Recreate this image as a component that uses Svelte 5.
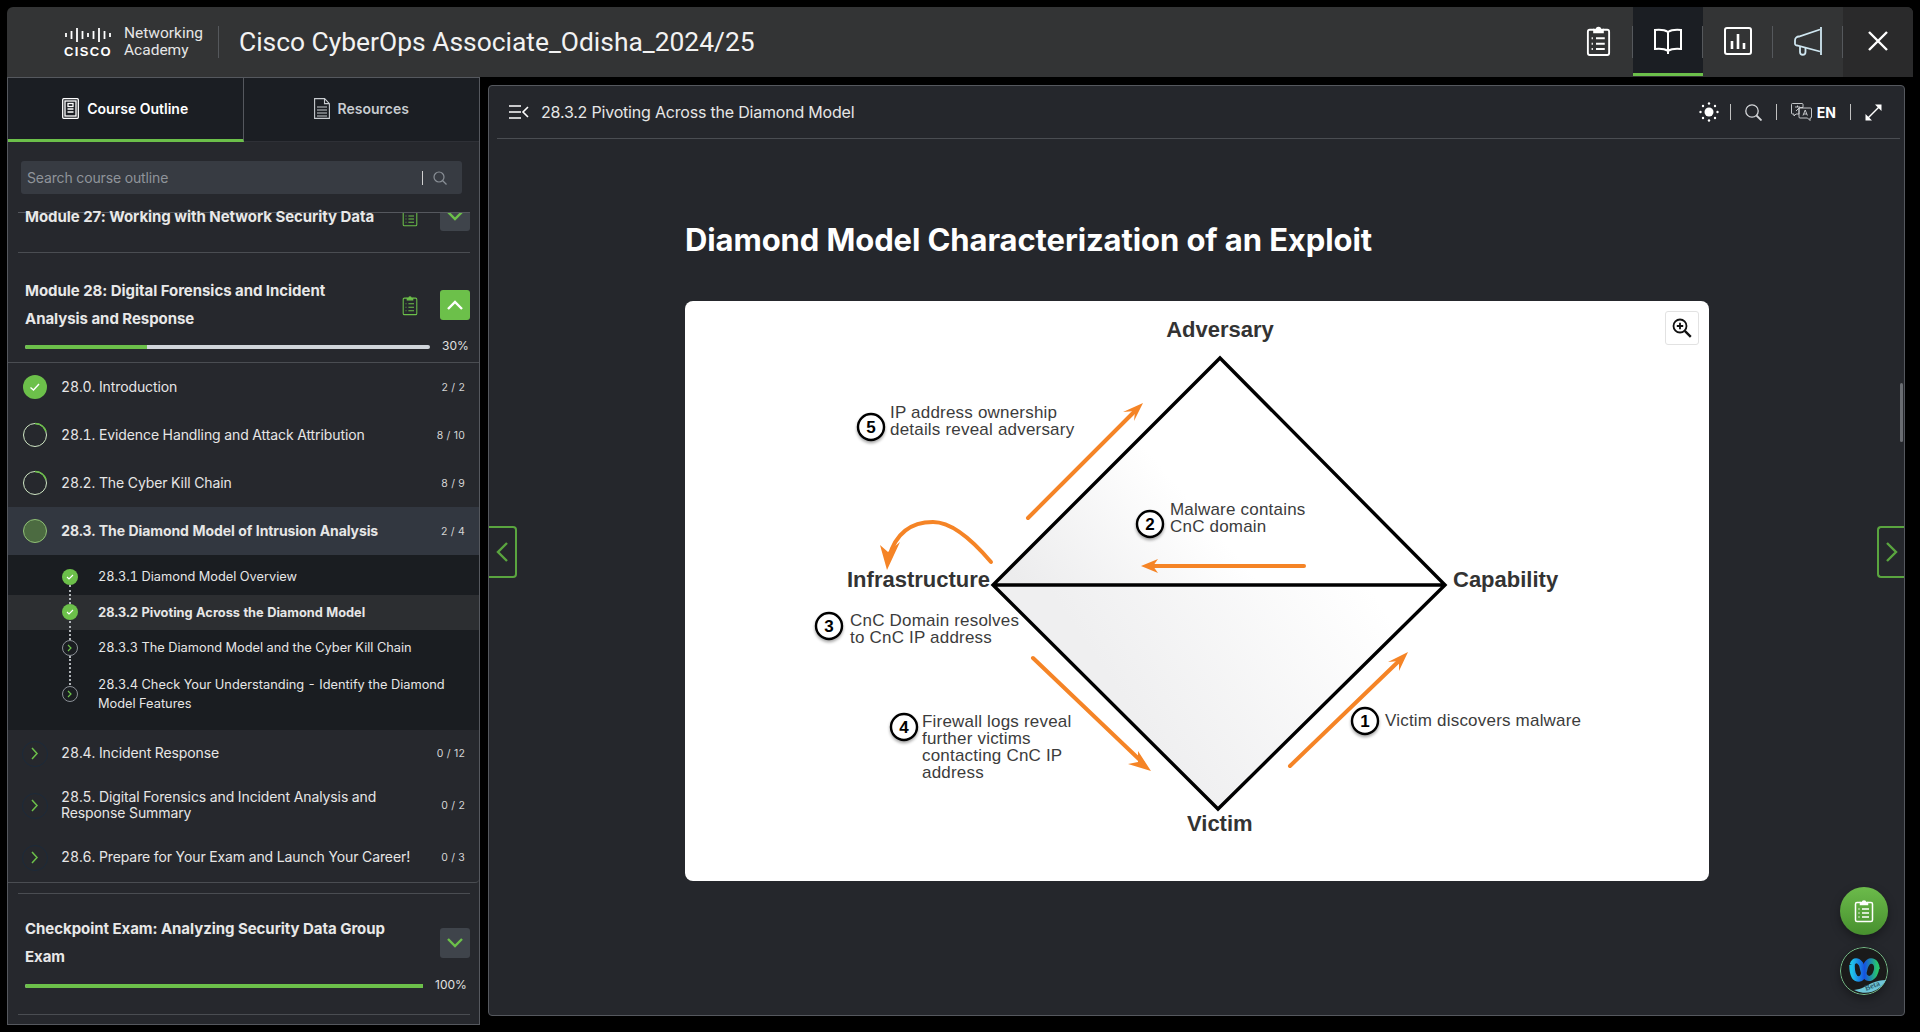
<script>
  const lessons = [
    { id: '28.0.', title: 'Introduction', count: '2 / 2', state: 'done' },
    { id: '28.1.', title: 'Evidence Handling and Attack Attribution', count: '8 / 10', state: 'part' },
    { id: '28.2.', title: 'The Cyber Kill Chain', count: '8 / 9', state: 'part' },
    { id: '28.3.', title: 'The Diamond Model of Intrusion Analysis', count: '2 / 4', state: 'open' }
  ]
  const subs = [
    { title: '28.3.1 Diamond Model Overview', done: true },
    { title: '28.3.2 Pivoting Across the Diamond Model', done: true, active: true },
    { title: '28.3.3 The Diamond Model and the Cyber Kill Chain' },
    { title: '28.3.4 Check Your Understanding - Identify the Diamond Model Features', tall: true }
  ]
  const later = [
    { id: '28.4.', title: 'Incident Response', count: '0 / 12' },
    { id: '28.5.', title: 'Digital Forensics and Incident Analysis and Response Summary', count: '0 / 2', tall: true },
    { id: '28.6.', title: 'Prepare for Your Exam and Launch Your Career!', count: '0 / 3' }
  ]
  // x, y and length of each bar in the cisco mark
  const bars = [
    [1, 5, 4], [6.500, 3, 8], [12, 0, 14], [17.500, 3, 8], [23, 5, 4], [28.500, 3, 8], [34, 0, 14], [39.500, 3, 8], [45, 5, 4]
  ]
  const notes = [
    { n: 5, cx: 186, cy: 126, x: 205, lines: [['IP address ownership', 117], ['details reveal adversary', 134]] },
    { n: 2, cx: 465, cy: 223, x: 485, lines: [['Malware contains', 214], ['CnC domain', 231]] },
    { n: 3, cx: 144, cy: 325, x: 165, lines: [['CnC Domain resolves', 325], ['to CnC IP address', 342]] },
    { n: 4, cx: 219, cy: 426, x: 237, lines: [['Firewall logs reveal', 426], ['further victims', 443], ['contacting CnC IP', 460], ['address', 477]] },
    { n: 1, cx: 680, cy: 420, x: 700, lines: [['Victim discovers malware', 425]] }
  ]
</script>

{#snippet clipboard(w, h, color, sw)}
  <svg width={w} height={h} viewBox="0 0 20 24" preserveAspectRatio="none" fill="none" stroke={color} stroke-width={sw}>
    <path d="M6.500 3.500H3a1.500 1.500 0 0 0-1.500 1.500v16A1.500 1.500 0 0 0 3 22.500h14a1.500 1.500 0 0 0 1.500-1.500V5A1.500 1.500 0 0 0 17 3.500h-3.500" />
    <path d="M6.500 5.500V3.500h2a1.500 1.500 0 0 1 3 0h2v2z" fill={color} />
    <path d="M8 10h7M8 14h7M8 18h7M4.500 10h1M4.500 14h1M4.500 18h1" />
  </svg>
{/snippet}

<div class="app">
  <header class="topbar">
    <div class="logo">
      <div class="cisco">
        <svg width="46" height="14" viewBox="0 0 46 14" fill="none" stroke="#fff" stroke-width="1.800">
          {#each bars as b}
            <line x1={b[0]} x2={b[0]} y1={b[1]} y2={b[1] + b[2]} />
          {/each}
        </svg>
        <span class="cisco-word">CISCO</span>
      </div>
      <div class="academy"><span>Networking</span><span>Academy</span></div>
    </div>
    <h1>Cisco CyberOps Associate_Odisha_2024/25</h1>
    <nav class="top-icons">
      <button class="top-btn">
        {@render clipboard(25, 32, '#fff', 1.5)}
      </button>
      <button class="top-btn current">
        <svg width="30" height="28" viewBox="0 0 30 28" fill="none" stroke="#fff" stroke-width="2">
          <path d="M15 6c-3-2-8-2.500-13-2v19c5-.5 10 0 13 2 3-2 8-2.500 13-2V4c-5-.5-10 0-13 2zM15 6v22" />
        </svg>
      </button>
      <button class="top-btn">
        <svg width="28" height="28" viewBox="0 0 28 28" fill="none" stroke="#fff" stroke-width="2">
          <rect x="1" y="1" width="26" height="26" rx="2" />
          <path d="M8 14v8M14 7v15M20 16v6" stroke-width="2.600" />
        </svg>
      </button>
      <button class="top-btn">
        <svg width="30" height="30" viewBox="0 0 30 30" fill="none" stroke="#cfe6f0" stroke-width="1.800">
          <path d="M27 3.500 6 10.500a4 4 0 0 0-4 4V17a2 2 0 0 0 2 2.500L27 25.500" />
          <path d="M28 1v28M7 20.500V26a2.700 2.700 0 0 0 5.500 0v-4" />
        </svg>
      </button>
      <button class="top-btn close">
        <svg width="20" height="20" viewBox="0 0 20 20" stroke="#fff" stroke-width="2.400"><path d="M1 1l18 18M19 1 1 19" /></svg>
      </button>
    </nav>
  </header>

  <div class="columns">
    <aside class="sidebar">
      <div class="tabs">
        <div class="tab selected">
          <svg width="17" height="21" viewBox="0 0 17 21" fill="none" stroke="#fff" stroke-width="1.300">
            <rect x=".7" y=".7" width="15.600" height="19.600" rx="1" />
            <rect x="3" y="3" width="11" height="15" />
            <rect x="6" y="5.500" width="5" height="3" />
            <path d="M5.500 11h6M5.500 14h6" />
          </svg>
          <span>Course Outline</span>
        </div>
        <div class="tab">
          <svg width="16" height="21" viewBox="0 0 16 21" fill="none" stroke="#c8ccd0" stroke-width="1.100">
            <path d="M.6.6h10l4.800 5v14.800H.6zM10.500.6v5h4.900M3 9h10M3 12h10M3 15h10M3 18h10" />
          </svg>
          <span>Resources</span>
        </div>
      </div>
      <div class="search-wrap">
        <div class="search">
          <span class="placeholder">Search course outline</span>
          <i class="caret"></i>
          <svg width="14" height="14" viewBox="0 0 14 14" fill="none" stroke="#888e95" stroke-width="1.200"><circle cx="6" cy="6" r="5" /><path d="m9.500 9.500 4 4" /></svg>
        </div>
      </div>

      <div class="outline">
        <section class="module clipped">
          <div class="mod-title">Module 27: Working with Network Security Data</div>
          <span class="mod-icon">{@render clipboard(16, 19, '#6cc04a', 1.3)}</span>
          <span class="chev-btn">
            <svg width="16" height="10" viewBox="0 0 16 10" fill="none" stroke="#6cc04a" stroke-width="2.400"><path d="m1 1 7 7 7-7" /></svg>
          </span>
        </section>

        <section class="module-open">
          <div class="mod-head">
            <div class="mod-title">Module 28: Digital Forensics and Incident Analysis and Response</div>
            <span class="mod-icon">{@render clipboard(16, 21, '#6cc04a', 1.3)}</span>
            <span class="chev-btn on">
              <svg width="16" height="10" viewBox="0 0 16 10" fill="none" stroke="#fff" stroke-width="2.400"><path d="m1 9 7-7 7 7" /></svg>
            </span>
          </div>
          <div class="progress">
            <div class="track"><div class="fill" style="width: 30%"></div></div>
            <span>30%</span>
          </div>
        </section>

        <div class="lessons">
          {#each lessons as l}
            <div class="lesson" class:open={l.state === 'open'}>
              <svg class="ring" width="26" height="26" viewBox="0 0 26 26">
                {#if l.state === 'done'}
                  <circle cx="13" cy="13" r="12" fill="#6cc04a" />
                  <path d="m8.500 13.500 3 2.500 5.500-6" fill="none" stroke="#fff" stroke-width="1.400" />
                {:else if l.state === 'open'}
                  <circle cx="13" cy="13" r="11.500" fill="#4c6b41" stroke="#8fbf75" />
                {:else}
                  <circle cx="13" cy="13" r="11.500" fill="none" stroke="#cfe6c4" stroke-width="1" />
                  <path d="M13 1.500a11.500 11.500 0 0 1 10.900 8" fill="none" stroke="#6cc04a" stroke-width="1.600" />
                {/if}
              </svg>
              <span class="lesson-title">{l.id} {l.title}</span>
              <span class="count">{l.count}</span>
            </div>
          {/each}

          <div class="subs">
            {#each subs as s}
              <div class="sub" class:active={s.active} class:tall={s.tall}>
                <span class="dot" class:done={s.done}>
                  {#if s.done}
                    <svg width="10" height="10" viewBox="0 0 10 10" fill="none" stroke="#fff" stroke-width="1.100"><path d="m2 5 2 2 4-4" /></svg>
                  {:else}
                    <svg width="6" height="8" viewBox="0 0 6 8" fill="none" stroke="#6cc04a" stroke-width="1.200"><path d="m1 1 3 3-3 3" /></svg>
                  {/if}
                </span>
                <span class="sub-title">{s.title}</span>
              </div>
            {/each}
          </div>

          {#each later as l}
            <div class="lesson" class:tall={l.tall}>
              <span class="ring go">
                <svg width="8" height="13" viewBox="0 0 8 13" fill="none" stroke="#6cc04a" stroke-width="1.500"><path d="m1 1 5 5.500L1 12" /></svg>
              </span>
              <span class="lesson-title">{l.id} {l.title}</span>
              <span class="count">{l.count}</span>
            </div>
          {/each}
        </div>

        <section class="module-open checkpoint">
          <div class="mod-head">
            <div class="mod-title">Checkpoint Exam: Analyzing Security Data Group Exam</div>
            <span class="chev-btn">
              <svg width="16" height="10" viewBox="0 0 16 10" fill="none" stroke="#6cc04a" stroke-width="2.400"><path d="m1 1 7 7 7-7" /></svg>
            </span>
          </div>
          <div class="progress full">
            <div class="track"><div class="fill" style="width: 100%"></div></div>
            <span>100%</span>
          </div>
        </section>
      </div>
    </aside>

    <main class="page">
      <div class="page-head">
        <svg width="20" height="14" viewBox="0 0 20 14" fill="none" stroke="#fff" stroke-width="1.600"><path d="M0 1h12M0 7h12M0 13h12M19 2l-5 5 5 5" /></svg>
        <span class="crumb">28.3.2 Pivoting Across the Diamond Model</span>
        <div class="tools">
          <svg width="20" height="20" viewBox="0 0 20 20" fill="#fff">
            <circle cx="10" cy="10" r="4.500" />
            <circle cx="10" cy="1.500" r="1.200" /><circle cx="10" cy="18.500" r="1.200" /><circle cx="1.500" cy="10" r="1.200" /><circle cx="18.500" cy="10" r="1.200" />
            <circle cx="4" cy="4" r="1.200" /><circle cx="16" cy="4" r="1.200" /><circle cx="4" cy="16" r="1.200" /><circle cx="16" cy="16" r="1.200" />
          </svg>
          <i class="sep first"></i>
          <svg width="17" height="17" viewBox="0 0 17 17" fill="none" stroke="#d5d7da" stroke-width="1.300"><circle cx="7" cy="7" r="6.200" /><path d="m11.500 11.500 5 5" stroke-width="1.800" /></svg>
          <i class="sep"></i>
          <span class="lang">
            <svg width="21" height="18" viewBox="0 0 21 18" fill="none" stroke="#d5d7da" stroke-width=".9">
              <path d="M1.500.5h9.500a1 1 0 0 1 1 1v3H9a1 1 0 0 0-1 1v5.500H5l-2 2v-2H1.500a1 1 0 0 1-1-1v-8.500a1 1 0 0 1 1-1z" />
              <path d="M9 5h10.500a1 1 0 0 1 1 1v8a1 1 0 0 1-1 1H19v2.500L16.500 15H9a1 1 0 0 1-1-1V6a1 1 0 0 1 1-1zM12 12.500l2.200-5.500 2.200 5.500M12.800 11h3M4 4h5M6.500 2.500V4M5 8l3-3" />
            </svg>
            <b>EN</b>
          </span>
          <i class="sep"></i>
          <svg width="17" height="17" viewBox="0 0 17 17" fill="#fff" stroke="#fff"><path d="M3 14 14 3" fill="none" stroke-width="1.400" /><path d="M10 .5h6.500V7zM.5 10v6.500H7z" stroke="none" /></svg>
        </div>
      </div>

      <div class="content">
        <h2>Diamond Model Characterization of an Exploit</h2>
        <figure class="card">
          <button class="zoom-btn" aria-label="zoom">
            <svg width="20" height="20" viewBox="0 0 20 20" fill="none" stroke="#111" stroke-width="1.800">
              <circle cx="8" cy="8" r="6.500" /><path d="m12.800 12.800 6 6" stroke-width="2.400" /><path d="M8 4.800v6.400M4.800 8h6.400" />
            </svg>
          </button>
          <svg class="diagram" width="1024" height="580" viewBox="0 0 1024 580">
            <defs>
              <linearGradient id="topfill" gradientUnits="userSpaceOnUse" x1="340" y1="290" x2="480" y2="170">
                <stop offset="0" stop-color="#ececed" />
                <stop offset="1" stop-color="#fff" />
              </linearGradient>
              <linearGradient id="botfill" gradientUnits="userSpaceOnUse" x1="440" y1="400" x2="660" y2="250">
                <stop offset="0" stop-color="#efeff0" />
                <stop offset="1" stop-color="#fff" />
              </linearGradient>
              <filter id="soft" x="-30%" y="-30%" width="160%" height="170%">
                <feDropShadow dx="0" dy="2" stdDeviation="1.500" flood-color="#000" flood-opacity=".35" />
              </filter>
            </defs>

            <path d="M535 57 760 284H308z" fill="url(#topfill)" />
            <path d="M308 284H760L533 508z" fill="url(#botfill)" />
            <path d="M535 57 760 284 533 508 308 284zM308 284H760" fill="none" stroke="#000" stroke-width="3.400" stroke-linejoin="miter" />

            <g class="arrows" fill="none" stroke="#f58426" stroke-width="4" stroke-linecap="round">
              <path d="M343 217 452 108" />
              <path d="M306 261Q272 221 248 221 214 221 204 256" />
              <path d="M619 265H466" />
              <path d="M348 357 458 462" />
              <path d="M605 465 716 358" />
            </g>
            <g fill="#f58426">
              <path d="M458 102 449 120 450 110 438 111z" />
              <path d="M202 269 195 244 203 251 215 241z" />
              <path d="M456 265 473 258 468 265 473 272z" />
              <path d="M466 470 443 463 453 461 453 450z" />
              <path d="M723 351 714 370 714 360 703 361z" />
            </g>

            <text class="corner" x="535" y="36" text-anchor="middle">Adversary</text>
            <text class="corner" x="162" y="286">Infrastructure</text>
            <text class="corner" x="768" y="286">Capability</text>
            <text class="corner" x="502" y="530">Victim</text>

            {#each notes as note}
              <circle cx={note.cx} cy={note.cy} r="13" fill="#fff" stroke="#000" stroke-width="2.400" filter="url(#soft)" />
              <text class="num" x={note.cx} y={note.cy + 6} text-anchor="middle">{note.n}</text>
              {#each note.lines as line}
                <text class="note" x={note.x} y={line[1]}>{line[0]}</text>
              {/each}
            {/each}
          </svg>
        </figure>
      </div>

      <div class="edge left">
        <svg width="12" height="20" viewBox="0 0 12 20" fill="none" stroke="#5aa53f" stroke-width="2.400"><path d="M11 1 2 10l9 9" /></svg>
      </div>
      <div class="edge right">
        <svg width="12" height="20" viewBox="0 0 12 20" fill="none" stroke="#5aa53f" stroke-width="2.400"><path d="m1 1 9 9-9 9" /></svg>
      </div>
      <i class="scrollthumb"></i>

      <div class="fab green">{@render clipboard(20, 24, '#fff', 1.5)}</div>
      <div class="fab webex">
        <svg width="48" height="48" viewBox="0 0 48 48">
          <defs>
            <linearGradient id="wx" x1="0" x2="1" y1="0" y2="0">
              <stop offset="0" stop-color="#20c4e8" />
              <stop offset=".5" stop-color="#1553e0" />
              <stop offset="1" stop-color="#27c46d" />
            </linearGradient>
          </defs>
          <circle cx="24" cy="24" r="23.500" fill="#1a1a1a" stroke="#79c08a" />
          <path d="M12 18c0 10 3 14 7 14s5-6 5.500-9 2.500-9 6.500-9 6 4 6 8" fill="none" stroke="url(#wx)" stroke-width="5.500" />
          <path d="M12 18c2-6 6-5 9-1 2 4 1 8 4 12s10 4 12-9" fill="none" stroke="url(#wx)" stroke-width="5" />
          <path d="M14 43c8-1 12-4 18-7 5-2 9-3 14-3a23.500 23.500 0 0 1-32 10z" fill="#6fc6d8" />
          <text class="beta" x="26" y="44" transform="rotate(-22 26 44)">Beta</text>
        </svg>
      </div>
    </main>
  </div>
</div>

<style>
  :global(body) {
    margin: 0;
    background: #000;
  }

  .app {
    width: 1920px;
    height: 1032px;
    padding: 7px 7px 0;
    box-sizing: border-box;
    font-family: Inter, "Liberation Sans", sans-serif;
    color: #fff;
    overflow: hidden;
  }

  .topbar {
    height: 70px;
    background: #333435;
    border-radius: 6px 6px 0 0;
    display: flex;
    align-items: center;
  }

  .logo {
    display: flex;
    align-items: center;
    height: 32px;
    margin-left: 57px;
    padding-right: 15px;
    border-right: 1px solid #55585c;
    gap: 12px;
  }

  .cisco {
    width: 48px;
    display: flex;
    flex-direction: column;
    align-items: center;
    gap: 5px;
  }

  .cisco-word {
    font: 700 13px/10px "Liberation Sans", sans-serif;
    letter-spacing: 1.400px;
  }

  .academy {
    display: flex;
    flex-direction: column;
    font: 400 15.500px/17px Roboto, sans-serif;
    color: #e6e6e6;
  }

  h1 {
    margin: 0 0 0 20px;
    font: 400 26.400px/32px Roboto, sans-serif;
    color: #f2f2f2;
  }

  .top-icons {
    margin-left: auto;
    display: flex;
    height: 70px;
  }

  .top-btn {
    width: 70px;
    height: 70px;
    padding: 0 0 3px;
    border: 0;
    background: none;
    display: flex;
    align-items: center;
    justify-content: center;
    position: relative;
  }

  .top-btn::after {
    content: '';
    position: absolute;
    right: 0;
    top: 19px;
    height: 32px;
    width: 1px;
    background: #55585c;
  }

  .top-btn.current {
    background: #1b1e23;
    border-bottom: 3px solid #6cc04a;
    box-sizing: border-box;
    height: 69px;
    padding: 0;
  }

  .top-btn.close {
    background: #2a2a2b;
    border-radius: 0 6px 0 0;
  }

  .top-btn.close::after {
    display: none;
  }

  .columns {
    display: flex;
    gap: 8px;
    height: 948px;
  }

  .sidebar {
    width: 473px;
    height: 948px;
    box-sizing: border-box;
    flex: none;
    background: #26282d;
    border: 1px solid #55585e;
    display: flex;
    flex-direction: column;
  }

  .tabs {
    display: flex;
    height: 64px;
    background: #1b1e23;
    flex: none;
  }

  .tab {
    width: 50%;
    display: flex;
    align-items: center;
    justify-content: center;
    gap: 8px;
    font-size: 14px;
    font-weight: 600;
    color: #c8ccd0;
    padding-bottom: 3px;
    box-sizing: border-box;
    border-bottom: 1px solid #2e3036;
  }

  .tab.selected {
    color: #fff;
    border-bottom: 3px solid #6cc04a;
    border-right: 1px solid #55585e;
    padding-bottom: 1px;
  }

  .search-wrap {
    padding: 19px 17px 18px 13px;
    flex: none;
  }

  .search {
    height: 33px;
    background: #373b42;
    border-radius: 3px;
    display: flex;
    align-items: center;
    padding: 0 15px 0 6px;
  }

  .placeholder {
    font-size: 14px;
    color: #8f949a;
    flex: 1;
    letter-spacing: -.15px;
  }

  .caret {
    width: 1px;
    height: 14px;
    background: #d0d0d0;
    margin-right: 10px;
  }

  .outline {
    flex: 1;
    position: relative;
  }

  .module.clipped {
    height: 41px;
    margin: 0 9px 0 10px;
    border-top: 1px solid #55585e;
    border-bottom: 1px solid #4a4d52;
    box-sizing: border-box;
    display: flex;
    align-items: flex-start;
  }

  .mod-title {
    font-size: 15px;
    line-height: 28px;
    font-weight: 700;
    color: #e8e8e8;
    letter-spacing: -.05px;
    flex: 1;
  }

  .clipped .mod-title {
    margin: -4px 0 0 7px;
    line-height: 16px;
  }

  .clipped .mod-icon {
    height: 14px;
    overflow: hidden;
    align-items: flex-end;
  }

  .clipped .chev-btn {
    height: 18px;
    margin-left: 22px;
    border-radius: 0 0 3px 3px;
    align-items: flex-start;
    overflow: hidden;
  }

  .clipped .chev-btn svg {
    margin-top: -2px;
  }

  .mod-icon {
    display: flex;
    flex: none;
  }

  .chev-btn {
    width: 30px;
    height: 30px;
    border-radius: 3px;
    background: #3f444b;
    display: flex;
    align-items: center;
    justify-content: center;
    flex: none;
  }

  .chev-btn.on {
    background: #6cc04a;
  }

  .module-open {
    padding: 24px 0 0 17px;
  }

  .mod-head {
    display: flex;
    align-items: center;
    padding-right: 9px;
  }

  .mod-head .mod-title {
    width: 340px;
    flex: none;
  }

  .mod-head .mod-icon {
    margin-left: auto;
  }

  .mod-head .chev-btn {
    margin-left: 22px;
  }

  .checkpoint .mod-head .chev-btn {
    margin-left: auto;
  }

  .checkpoint .mod-head .mod-title {
    width: 370px;
  }

  .progress {
    display: flex;
    align-items: center;
    height: 16px;
    margin-top: 4px;
    font-size: 12px;
    color: #e0e0e0;
  }

  .progress.full {
    margin-top: 6px;
  }

  .track {
    width: 405px;
    height: 4px;
    border-radius: 2px;
    background: #d0d5da;
    margin-right: 12px;
    margin-top: 3px;
  }

  .progress.full .track {
    width: 398px;
  }

  .fill {
    height: 100%;
    background: #6cc04a;
    border-radius: 2px 0 0 2px;
  }

  .lessons {
    margin-top: 9px;
    border-top: 1px solid #4a4d52;
    border-bottom: 1px solid #4a4d52;
    border-radius: 0 0 4px 0;
  }

  .lesson {
    height: 48px;
    display: flex;
    align-items: center;
    padding: 0 14px 0 14px;
    font-size: 14px;
    color: #e6e6e6;
  }

  .lesson.tall {
    height: 56px;
    line-height: 16px;
  }

  .lesson.open {
    background: #323740;
    font-weight: 700;
  }

  .ring {
    width: 26px;
    height: 26px;
    flex: none;
    margin-right: 13px;
  }

  .ring.go {
    box-sizing: border-box;
    border: 1px solid #1c2a3a;
    border-radius: 50%;
    display: flex;
    align-items: center;
    justify-content: center;
  }

  .lesson-title {
    flex: 1;
    padding: 0 20px 2px 0;
    font-feature-settings: "tnum";
    letter-spacing: -.1px;
  }

  .count {
    font-size: 10.500px;
    color: #d5d5d5;
    letter-spacing: .2px;
    font-weight: 400;
    white-space: nowrap;
  }

  .subs {
    background: #1a1d21;
    padding: 4px 0 8px;
  }

  .sub {
    height: 35.500px;
    display: flex;
    align-items: center;
    padding-left: 54px;
    font-size: 12.800px;
    line-height: 19px;
    position: relative;
    color: #e6e6e6;
    font-feature-settings: "tnum";
  }

  .sub.tall {
    height: 56px;
  }

  .sub.active {
    background: #2c2e31;
    font-weight: 700;
  }

  .sub:not(:last-child)::after {
    content: '';
    position: absolute;
    left: 61px;
    top: 26px;
    height: 19px;
    border-left: 2px dotted #b0b4b8;
    z-index: 1;
  }

  .sub:nth-child(3)::after {
    height: 29px;
  }

  .dot {
    width: 16px;
    height: 16px;
    box-sizing: border-box;
    border: 1px solid #8b9096;
    background: #1a1d21;
    border-radius: 50%;
    display: flex;
    align-items: center;
    justify-content: center;
    flex: none;
    margin-right: 20px;
    position: relative;
    z-index: 2;
  }

  .dot.done {
    background: #6cc04a;
    border: 0;
  }

  .sub-title {
    width: 360px;
  }

  .checkpoint {
    padding-top: 32px;
    position: relative;
  }

  .checkpoint::before,
  .checkpoint::after {
    content: '';
    position: absolute;
    left: 10px;
    right: 9px;
    height: 1px;
    background: #4a4d52;
    top: 10px;
  }

  .checkpoint::after {
    top: 131px;
  }

  .page {
    flex: 1;
    margin: 8px 8px 0 0;
    height: 931px;
    box-sizing: border-box;
    background: #25272c;
    border: 1px solid #55585e;
    border-radius: 4px;
    position: relative;
  }

  .page-head {
    height: 53px;
    margin: 0 4px 0 8px;
    padding: 0 18px 0 12px;
    border-bottom: 1px solid #4a4d52;
    box-sizing: border-box;
    display: flex;
    align-items: center;
  }

  .crumb {
    margin-left: 12px;
    font-size: 16px;
    color: #e6e6e6;
    letter-spacing: -.2px;
  }

  .tools {
    margin-left: auto;
    display: flex;
    align-items: center;
    gap: 14px;
  }

  .sep {
    width: 1px;
    height: 16px;
    background: #c0c0c0;
  }

  .sep.first {
    margin-left: -3px;
  }

  .lang {
    display: flex;
    align-items: center;
    gap: 5px;
    font-size: 14px;
  }

  .content {
    padding: 81px 0 0 196px;
  }

  h2 {
    margin: 0 0 41px;
    font-size: 31px;
    line-height: 40px;
    font-weight: 700;
    color: #fff;
    letter-spacing: -.1px;
  }

  .card {
    margin: 0;
    width: 1024px;
    height: 580px;
    background: #fff;
    border-radius: 8px;
    position: relative;
  }

  .diagram {
    display: block;
    font-family: "Liberation Sans", sans-serif;
  }

  .corner {
    font-size: 22px;
    font-weight: 700;
    fill: #333;
  }

  .num {
    font-size: 17px;
    font-weight: 700;
    fill: #000;
  }

  .note {
    font-size: 17px;
    fill: #3c3c3c;
    letter-spacing: .2px;
  }

  .zoom-btn {
    position: absolute;
    right: 10px;
    top: 10px;
    width: 34px;
    height: 34px;
    padding: 0;
    background: #fff;
    border: 1px solid #e2e2e2;
    border-radius: 3px;
    display: flex;
    align-items: center;
    justify-content: center;
  }

  .edge {
    position: absolute;
    top: 440px;
    height: 52px;
    box-sizing: border-box;
    border: 2px solid #5aa53f;
    display: flex;
    align-items: center;
    justify-content: center;
  }

  .edge.left {
    left: 0;
    width: 28px;
    border-left: 0;
    border-radius: 0 4px 4px 0;
  }

  .edge.right {
    right: 0;
    width: 27px;
    border-right: 0;
    border-radius: 4px 0 0 4px;
  }

  .scrollthumb {
    position: absolute;
    right: 1px;
    top: 297px;
    width: 3px;
    height: 59px;
    background: #6a6d72;
    border-radius: 2px;
  }

  .fab {
    position: absolute;
    right: 16px;
    width: 48px;
    height: 48px;
    border-radius: 50%;
    display: flex;
    align-items: center;
    justify-content: center;
    box-shadow: 0 4px 10px rgba(0, 0, 0, .35);
  }

  .fab.green {
    top: 801px;
    background: linear-gradient(#6cbb4b, #47902e);
  }

  .fab.webex {
    top: 861px;
    overflow: hidden;
  }

  .beta {
    font: 700 8px "Liberation Serif", serif;
    fill: #2b5f70;
  }
</style>
